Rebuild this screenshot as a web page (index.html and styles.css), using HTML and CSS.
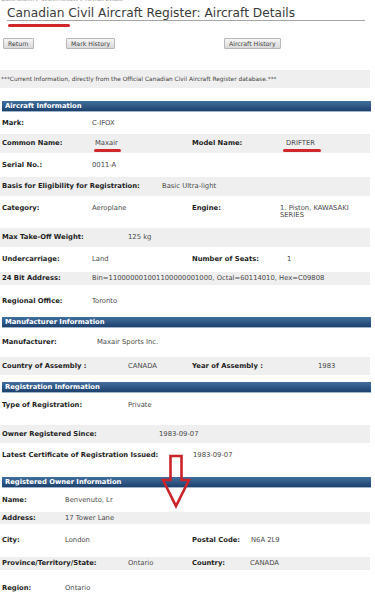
FILE: index.html
```html
<!DOCTYPE html>
<html lang="en">
<head>
<meta charset="UTF-8">
<meta name="viewport" content="width=device-width, initial-scale=1.0">
<title>Canadian Civil Aircraft Register: Aircraft Details</title>
<link rel="stylesheet" href="styles.css">
</head>
<body>

<div class="crumbs">Quick Search &gt; Search Results &gt; Aircraft Details</div>
<h1 class="title">Canadian Civil Aircraft Register: Aircraft Details</h1>
<div class="title-bar"></div>

<div class="btn-bar">
  <div><button class="btn">Return</button></div>
  <div><button class="btn">Mark History</button></div>
  <div><button class="btn">Aircraft History</button></div>
</div>

<div class="notice">***Current Information, directly from the Official Canadian Civil Aircraft Register database.***</div>

<div class="section">
  <div class="sec-head">Aircraft Information</div>
  <div class="row h22"><span class="lbl c90">Mark:</span><span class="val">C-IFOX</span></div>
  <div class="row alt h19">
    <span class="lbl c93">Common Name:</span>
    <span class="val c97"><span class="mark m-maxair">Maxair</span></span>
    <span class="lbl c94">Model Name:</span>
    <span class="val"><span class="mark m-drifter">DRIFTER</span></span>
  </div>
  <div class="row h24"><span class="lbl c90">Serial No.:</span><span class="val">0011-A</span></div>
  <div class="row alt h19"><span class="lbl c160">Basis for Eligibility for Registration:</span><span class="val">Basic Ultra-light</span></div>
  <div class="row top h32">
    <span class="lbl c90">Category:</span>
    <span class="val c100">Aeroplane</span>
    <span class="lbl c88">Engine:</span>
    <span class="val">1. Piston, KAWASAKI<br>SERIES</span>
  </div>
  <div class="row alt h19"><span class="lbl c126">Max Take-Off Weight:</span><span class="val">125 kg</span></div>
  <div class="row h25">
    <span class="lbl c90">Undercarriage:</span>
    <span class="val c100">Land</span>
    <span class="lbl c95">Number of Seats:</span>
    <span class="val">1</span>
  </div>
  <div class="row alt h13"><span class="lbl c90">24 Bit Address:</span><span class="val">Bin=110000001001100000001000, Octal=60114010, Hex=C09808</span></div>
  <div class="row h32"><span class="lbl c90">Regional Office:</span><span class="val">Toronto</span></div>
</div>

<div class="section">
  <div class="sec-head">Manufacturer Information</div>
  <div class="row h29"><span class="lbl c95">Manufacturer:</span><span class="val">Maxair Sports Inc.</span></div>
  <div class="row alt h18">
    <span class="lbl c126">Country of Assembly :</span>
    <span class="val c64">CANADA</span>
    <span class="lbl c126">Year of Assembly :</span>
    <span class="val">1983</span>
  </div>
</div>

<div class="section spaced">
  <div class="sec-head">Registration Information</div>
  <div class="row top h32"><span class="lbl c126">Type of Registration:</span><span class="val">Private</span></div>
  <div class="row alt h18"><span class="lbl c157">Owner Registered Since:</span><span class="val">1983-09-07</span></div>
  <div class="row top h34"><span class="lbl c191">Latest Certificate of Registration Issued:</span><span class="val">1983-09-07</span></div>
</div>

<div class="section">
  <div class="sec-head">Registered Owner Information</div>
  <div class="row h24"><span class="lbl c63">Name:</span><span class="val">Benvenuto, Lr</span></div>
  <div class="row alt h12"><span class="lbl c63">Address:</span><span class="val">17 Tower Lane</span></div>
  <div class="row h33">
    <span class="lbl c63">City:</span>
    <span class="val c127">London</span>
    <span class="lbl c59">Postal Code:</span>
    <span class="val">N6A 2L9</span>
  </div>
  <div class="row alt h13">
    <span class="lbl c126">Province/Territory/State:</span>
    <span class="val c64">Ontario</span>
    <span class="lbl c58">Country:</span>
    <span class="val">CANADA</span>
  </div>
  <div class="row h36"><span class="lbl c63">Region:</span><span class="val">Ontario</span></div>
</div>

<svg class="arrow" width="33" height="57" viewBox="0 0 33 57">
  <path d="M10.5 3 H21.5 V27 H29 L16 53 L3 27 H10.5 Z" fill="none" stroke="#cc2229" stroke-width="2.6"/>
</svg>

</body>
</html>
```

FILE: styles.css
```css
* {
  box-sizing: border-box;
}
body {
  position: relative;
  margin: 0;
  background-color: #ffffff;
  font-family: "DejaVu Sans", Verdana, sans-serif;
  color: #333;
  overflow: hidden;
}
.crumbs {
  margin-top: -4px;
  padding-left: 1px;
  font-size: 5px;
  line-height: 6px;
  color: #888;
}
.title {
  width: 358px;
  margin: 4px 0 0 7px;
  font-size: 12.2px;
  font-weight: normal;
  line-height: 14px;
  color: #3a3a3a;
  border-bottom: 1px solid #a6a6a6;
}
.title-bar {
  width: 62px;
  height: 3px;
  margin: 3px 0 0 8px;
  border-radius: 2px;
  background-color: #d0272d;
}
.btn-bar {
  display: grid;
  grid-template-columns: 63px 158px auto;
  margin-top: 11px;
  padding-left: 3px;
}
.btn-bar div {
  display: flex;
  height: 11px;
}
.btn {
  display: block;
  height: 11px;
  padding: 0 4px;
  font-family: "DejaVu Sans", Verdana, sans-serif;
  font-size: 6.2px;
  line-height: 9px;
  color: #444;
  background: linear-gradient(#f6f6f6, #d9d9d9);
  border: 1px solid #b8b8b8;
  border-radius: 1px;
}
.notice {
  width: 370px;
  height: 18px;
  margin-top: 21px;
  padding-left: 1px;
  font-size: 5.9px;
  line-height: 18px;
  color: #444;
  background-color: #efefef;
  white-space: nowrap;
}
.section {
  width: 371px;
}
.notice + .section {
  margin-top: 13px;
}
.section.spaced {
  margin-top: 7px;
}
.sec-head {
  height: 11px;
  margin-left: 2px;
  padding-left: 3px;
  font-size: 6.8px;
  font-weight: bold;
  line-height: 11px;
  color: #ffffff;
  background: linear-gradient(#426f9f, #1e416d);
  border-bottom: 1px solid #9fb3c9;
}
.row {
  display: flex;
  align-items: center;
  width: 370px;
  padding-left: 2px;
  font-size: 6.8px;
  line-height: 7px;
  white-space: nowrap;
}
.row.top {
  align-items: flex-start;
  padding-top: 9px;
}
.alt {
  background-color: #efefef;
}
.lbl {
  flex-shrink: 0;
  font-weight: bold;
  color: #1e1e1e;
}
.val {
  flex-shrink: 0;
  color: #4a4a4a;
}
.mark {
  position: relative;
}
.mark::after {
  content: "";
  position: absolute;
  top: 10px;
  height: 2.5px;
  border-radius: 2px;
  background-color: #d0272d;
}
.m-maxair::after {
  left: -1px;
  width: 27px;
}
.m-drifter::after {
  left: -3px;
  width: 38px;
}
.c58 { width: 58px; }
.c59 { width: 59px; }
.c63 { width: 63px; }
.c64 { width: 64px; }
.c88 { width: 88px; }
.c90 { width: 90px; }
.c93 { width: 93px; }
.c94 { width: 94px; }
.c95 { width: 95px; }
.c97 { width: 97px; }
.c100 { width: 100px; }
.c126 { width: 126px; }
.c127 { width: 127px; }
.c157 { width: 157px; }
.c160 { width: 160px; }
.c191 { width: 191px; }
.h12 { height: 12px; }
.h13 { height: 13px; }
.h18 { height: 18px; }
.h19 { height: 19px; }
.h22 { height: 22px; }
.h24 { height: 24px; }
.h25 { height: 25px; }
.h29 { height: 29px; }
.h32 { height: 32px; }
.h33 { height: 33px; }
.h34 { height: 34px; }
.h36 { height: 36px; }
.arrow {
  position: absolute;
  left: 160px;
  top: 453px;
}
```
